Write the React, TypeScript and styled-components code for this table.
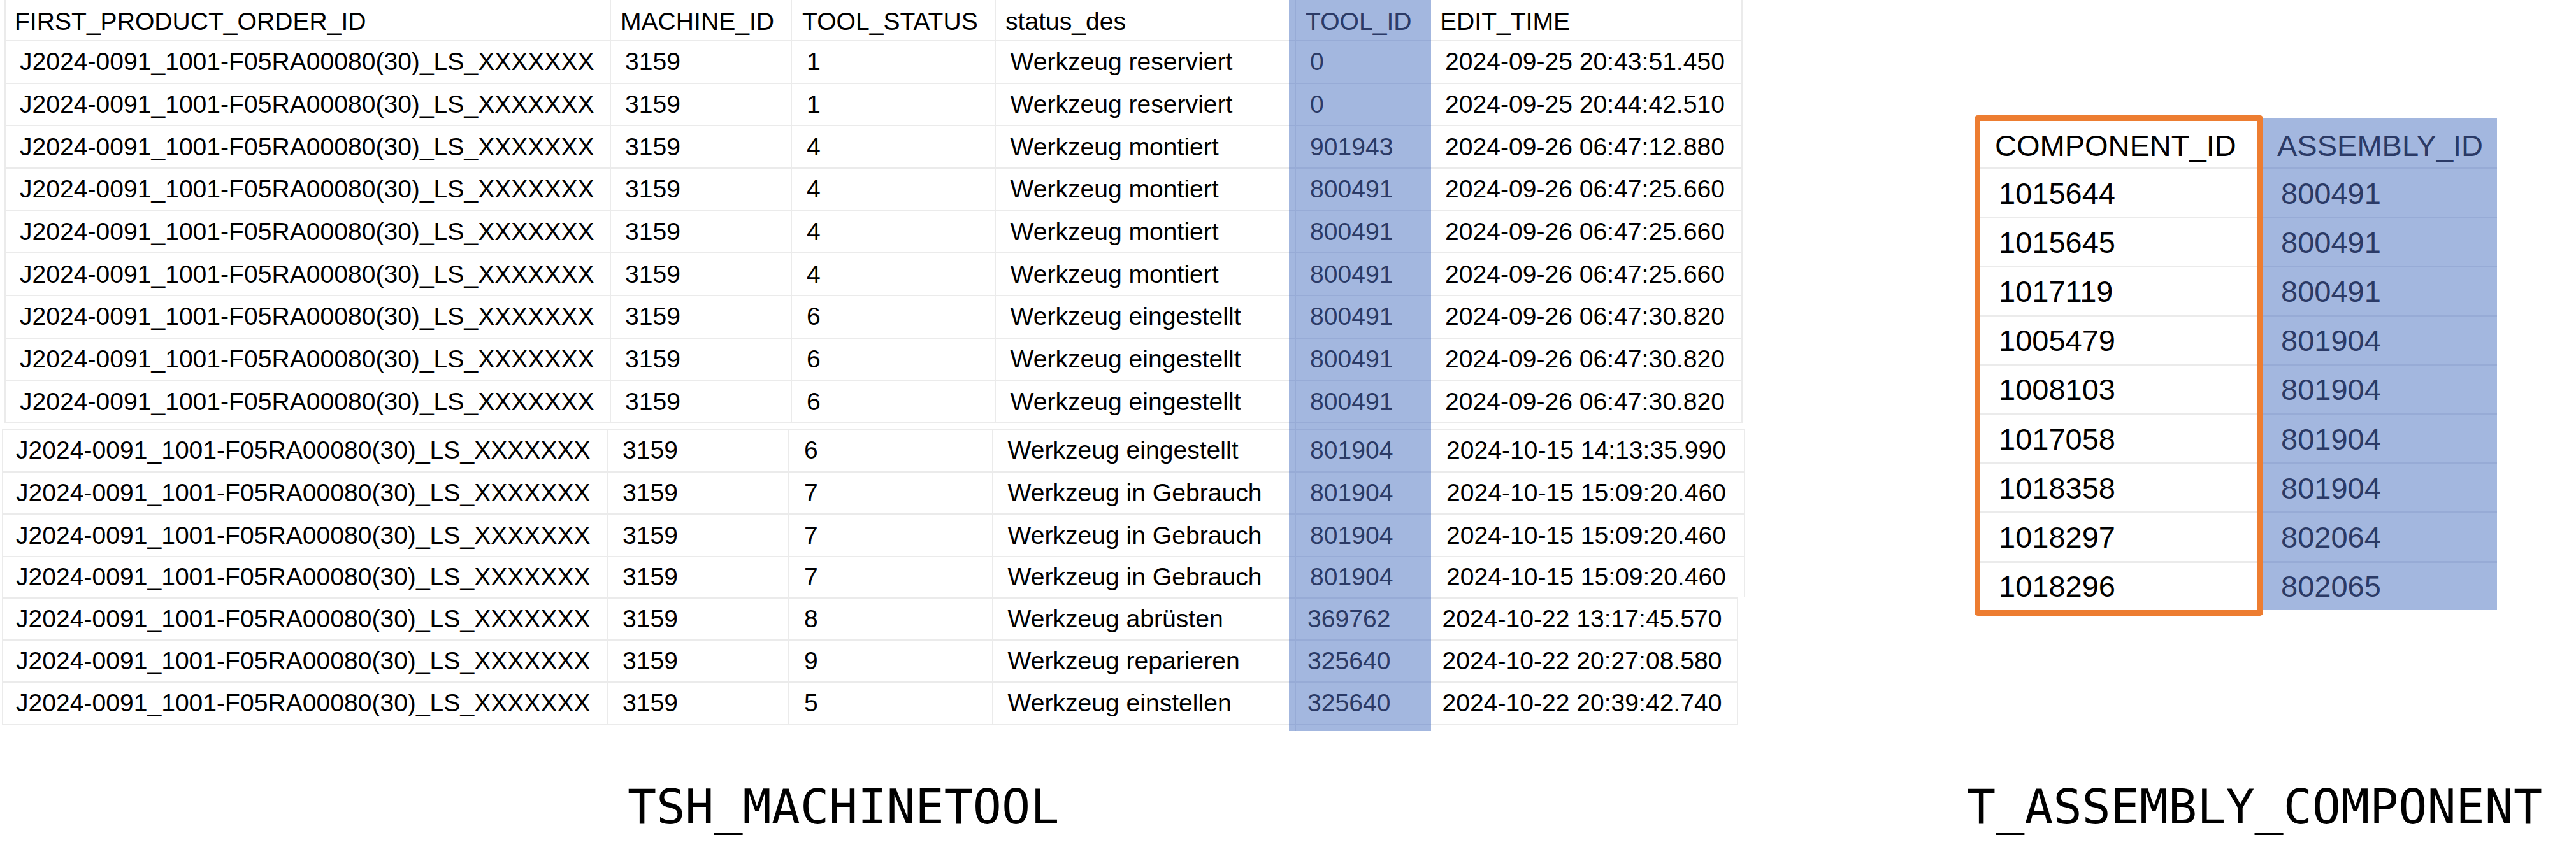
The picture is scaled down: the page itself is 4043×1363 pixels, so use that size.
import React from "react";
import styled, { createGlobalStyle } from "styled-components";

const LINE = "#ebebeb";
const BLUE = "#a3b7df";
const BLUE_LINE = "#97abd6";
const NAVY = "#2b3a66";

const GlobalStyle = createGlobalStyle`
  html, body { margin: 0; padding: 0; background: #ffffff; }
  #root { width: 4043px; height: 1363px; }
`;

const Page = styled.div`
  display: grid;
  grid-template-columns: 3086px 957px;
  grid-template-rows: 1229.5px 133.5px;
  width: 4043px;
  height: 1363px;
  overflow: hidden;
  background: #ffffff;
  font-family: "Liberation Sans", Arial, sans-serif;
`;

/* ---------- TSH_MACHINETOOL result grid ---------- */

const MachineGrid = styled.div`
  display: flex;
  flex-direction: column;
  align-self: start;
`;

const Block = styled.div<{ $left: number }>`
  display: flex;
  flex-direction: column;
  margin-left: ${(p) => p.$left}px;
`;

const Row = styled.div<{ $cols: string; $h: number }>`
  display: grid;
  grid-template-columns: ${(p) => p.$cols};
  height: ${(p) => p.$h}px;
`;

const Cell = styled.div<{
  $pad: number;
  $hl?: boolean;
  $head?: boolean;
  $first?: boolean;
  $noRight?: boolean;
  $top?: boolean;
  $noBottom?: boolean;
}>`
  box-sizing: border-box;
  display: flex;
  align-items: center;
  min-width: 0;
  padding-left: ${(p) => p.$pad}px;
  padding-top: ${(p) => (p.$head ? 5 : 0)}px;
  font-size: 39.1px;
  color: ${(p) => (p.$hl ? NAVY : "#000000")};
  white-space: nowrap;
  overflow: visible;
  background: ${(p) =>
    p.$hl
      ? `linear-gradient(to right, ${BLUE} 9px, ${BLUE_LINE} 9px, ${BLUE_LINE} 11px, ${BLUE} 11px)`
      : "#ffffff"};
  border-bottom: ${(p) =>
    p.$noBottom ? "none" : `2px solid ${p.$hl ? BLUE_LINE : LINE}`};
  border-top: ${(p) => (p.$top ? `2px solid ${p.$hl ? BLUE_LINE : LINE}` : "none")};
  border-right: ${(p) => (p.$hl || p.$noRight ? "none" : `2px solid ${LINE}`)};
  border-left: ${(p) => (p.$first ? `2px solid ${LINE}` : "none")};
`;

const GapCell = styled.div<{ $hl?: boolean }>`
  background: ${(p) =>
    p.$hl
      ? `linear-gradient(to right, ${BLUE} 9px, ${BLUE_LINE} 9px, ${BLUE_LINE} 11px, ${BLUE} 11px)`
      : "transparent"};
`;

/* ---------- T_ASSEMBLY_COMPONENT ---------- */

const AssemblyArea = styled.div`
  display: flex;
  align-items: flex-start;
  align-self: start;
  padding-top: 181px;
  padding-left: 13px;
  font-size: 47px;
`;

const OrangeFrame = styled.div`
  box-sizing: border-box;
  width: 453px;
  height: 786px;
  border: 9px solid #ed7d31;
  border-radius: 5px;
  display: flex;
  flex-direction: column;
  overflow: hidden;
  background: #ffffff;
`;

const BlueColumn = styled.div`
  display: flex;
  flex-direction: column;
  width: 367px;
  height: 773px;
  margin-top: 4px;
  background: ${BLUE};
  overflow: hidden;
`;

const AsmCell = styled.div<{ $hl?: boolean; $head?: boolean; $h: number; $pad: number; $shift: number }>`
  box-sizing: border-box;
  flex: none;
  display: flex;
  align-items: center;
  height: ${(p) => p.$h}px;
  padding-left: ${(p) => p.$pad}px;
  padding-top: ${(p) => p.$shift}px;
  white-space: nowrap;
  color: ${(p) => (p.$hl ? NAVY : "#000000")};
  border-top: ${(p) => (p.$head ? "none" : `3px solid ${p.$hl ? BLUE_LINE : LINE}`)};
`;

/* ---------- captions ---------- */

const Caption = styled.div<{ $left: number }>`
  font-family: "DejaVu Sans Mono", "Liberation Mono", monospace;
  font-size: 75px;
  line-height: 75px;
  color: #000000;
  white-space: nowrap;
  padding-left: ${(p) => p.$left}px;
`;

/* ---------- data ---------- */

type Rec = [string, string, string, string, string, string];

const ORDER = "J2024-0091_1001-F05RA00080(30)_LS_XXXXXXX";

const rowsA: Rec[] = [
  [ORDER, "3159", "1", "Werkzeug reserviert", "0", "2024-09-25 20:43:51.450"],
  [ORDER, "3159", "1", "Werkzeug reserviert", "0", "2024-09-25 20:44:42.510"],
  [ORDER, "3159", "4", "Werkzeug montiert", "901943", "2024-09-26 06:47:12.880"],
  [ORDER, "3159", "4", "Werkzeug montiert", "800491", "2024-09-26 06:47:25.660"],
  [ORDER, "3159", "4", "Werkzeug montiert", "800491", "2024-09-26 06:47:25.660"],
  [ORDER, "3159", "4", "Werkzeug montiert", "800491", "2024-09-26 06:47:25.660"],
  [ORDER, "3159", "6", "Werkzeug eingestellt", "800491", "2024-09-26 06:47:30.820"],
  [ORDER, "3159", "6", "Werkzeug eingestellt", "800491", "2024-09-26 06:47:30.820"],
  [ORDER, "3159", "6", "Werkzeug eingestellt", "800491", "2024-09-26 06:47:30.820"],
];

const rowsB: Rec[] = [
  [ORDER, "3159", "6", "Werkzeug eingestellt", "801904", "2024-10-15 14:13:35.990"],
  [ORDER, "3159", "7", "Werkzeug in Gebrauch", "801904", "2024-10-15 15:09:20.460"],
  [ORDER, "3159", "7", "Werkzeug in Gebrauch", "801904", "2024-10-15 15:09:20.460"],
  [ORDER, "3159", "7", "Werkzeug in Gebrauch", "801904", "2024-10-15 15:09:20.460"],
];

const rowsC: Rec[] = [
  [ORDER, "3159", "8", "Werkzeug abrüsten", "369762", "2024-10-22 13:17:45.570"],
  [ORDER, "3159", "9", "Werkzeug reparieren", "325640", "2024-10-22 20:27:08.580"],
  [ORDER, "3159", "5", "Werkzeug einstellen", "325640", "2024-10-22 20:39:42.740"],
];

const HEADERS: Rec = ["FIRST_PRODUCT_ORDER_ID", "MACHINE_ID", "TOOL_STATUS", "status_des", "TOOL_ID", "EDIT_TIME"];

type BlockSpec = {
  left: number;
  widths: number[];
  pads: number[];
  headPads?: number[];
  rows: Rec[];
  rowH: number;
  lastRowH?: number;
  top?: boolean;
};

const blocks: BlockSpec[] = [
  {
    left: 7,
    widths: [952, 284, 320, 460, 223, 489],
    pads: [22, 22, 23, 22.5, 33, 22],
    headPads: [14, 15, 16, 15, 26, 14],
    rows: rowsA,
    rowH: 66.7,
  },
  {
    left: 3,
    widths: [952, 284, 320, 464, 223, 493],
    pads: [20, 22, 23, 22.5, 33, 24],
    rows: rowsB,
    rowH: 66.7,
    lastRowH: 63,
    top: true,
  },
  {
    left: 3,
    widths: [952, 284, 320, 464, 223, 482],
    pads: [20, 22, 23, 22.5, 29, 17.5],
    rows: rowsC,
    rowH: 66.2,
    top: true,
  },
];

const HL = 4;

function GridBlock({ spec }: { spec: BlockSpec }) {
  const cols = spec.widths.map((w) => `${w}px`).join(" ");
  return (
    <Block $left={spec.left}>
      {spec.headPads && (
        <Row $cols={cols} $h={65}>
          {HEADERS.map((h, i) => (
            <Cell key={i} $head $pad={spec.headPads![i]} $hl={i === HL} $first={i === 0} $noRight={i === 3}>
              {h}
            </Cell>
          ))}
        </Row>
      )}
      {spec.rows.map((r, ri) => {
        const last = ri === spec.rows.length - 1;
        const cropped = last && spec.lastRowH !== undefined;
        return (
          <Row key={ri} $cols={cols} $h={cropped ? spec.lastRowH! : spec.rowH + (ri === 0 && spec.top ? 2 : 0)}>
            {r.map((v, i) => (
              <Cell
                key={i}
                $pad={spec.pads[i]}
                $hl={i === HL}
                $first={i === 0}
                $noRight={i === 3}
                $top={ri === 0 && spec.top}
                $noBottom={cropped}
              >
                {v}
              </Cell>
            ))}
          </Row>
        );
      })}
    </Block>
  );
}

function BlueGap({ h, left, widths }: { h: number; left: number; widths: number[] }) {
  return (
    <Block $left={left}>
      <Row $cols={widths.map((w) => `${w}px`).join(" ")} $h={h}>
        {widths.map((_, i) => (
          <GapCell key={i} $hl={i === HL} />
        ))}
      </Row>
    </Block>
  );
}

const components = ["1015644", "1015645", "1017119", "1005479", "1008103", "1017058", "1018358", "1018297", "1018296"];
const assemblies = ["800491", "800491", "800491", "801904", "801904", "801904", "801904", "802064", "802065"];

export default function App() {
  return (
    <>
      <GlobalStyle />
      <Page>
        <MachineGrid>
          <GridBlock spec={blocks[0]} />
          <BlueGap h={7.7} left={7} widths={blocks[0].widths} />
          <GridBlock spec={blocks[1]} />
          <GridBlock spec={blocks[2]} />
          <BlueGap h={9} left={3} widths={blocks[2].widths} />
        </MachineGrid>

        <AssemblyArea>
          <OrangeFrame>
            <AsmCell $head $h={73} $pad={23} $shift={4}>
              COMPONENT_ID
            </AsmCell>
            {components.map((c, i) => (
              <AsmCell key={i} $h={77.2} $pad={29} $shift={0}>
                {c}
              </AsmCell>
            ))}
          </OrangeFrame>
          <BlueColumn>
            <AsmCell $head $hl $h={78} $pad={22} $shift={9}>
              ASSEMBLY_ID
            </AsmCell>
            {assemblies.map((a, i) => (
              <AsmCell key={i} $hl $h={77.2} $pad={28} $shift={0}>
                {a}
              </AsmCell>
            ))}
          </BlueColumn>
        </AssemblyArea>

        <Caption $left={985}>TSH_MACHINETOOL</Caption>
        <Caption $left={1}>T_ASSEMBLY_COMPONENT</Caption>
      </Page>
    </>
  );
}
